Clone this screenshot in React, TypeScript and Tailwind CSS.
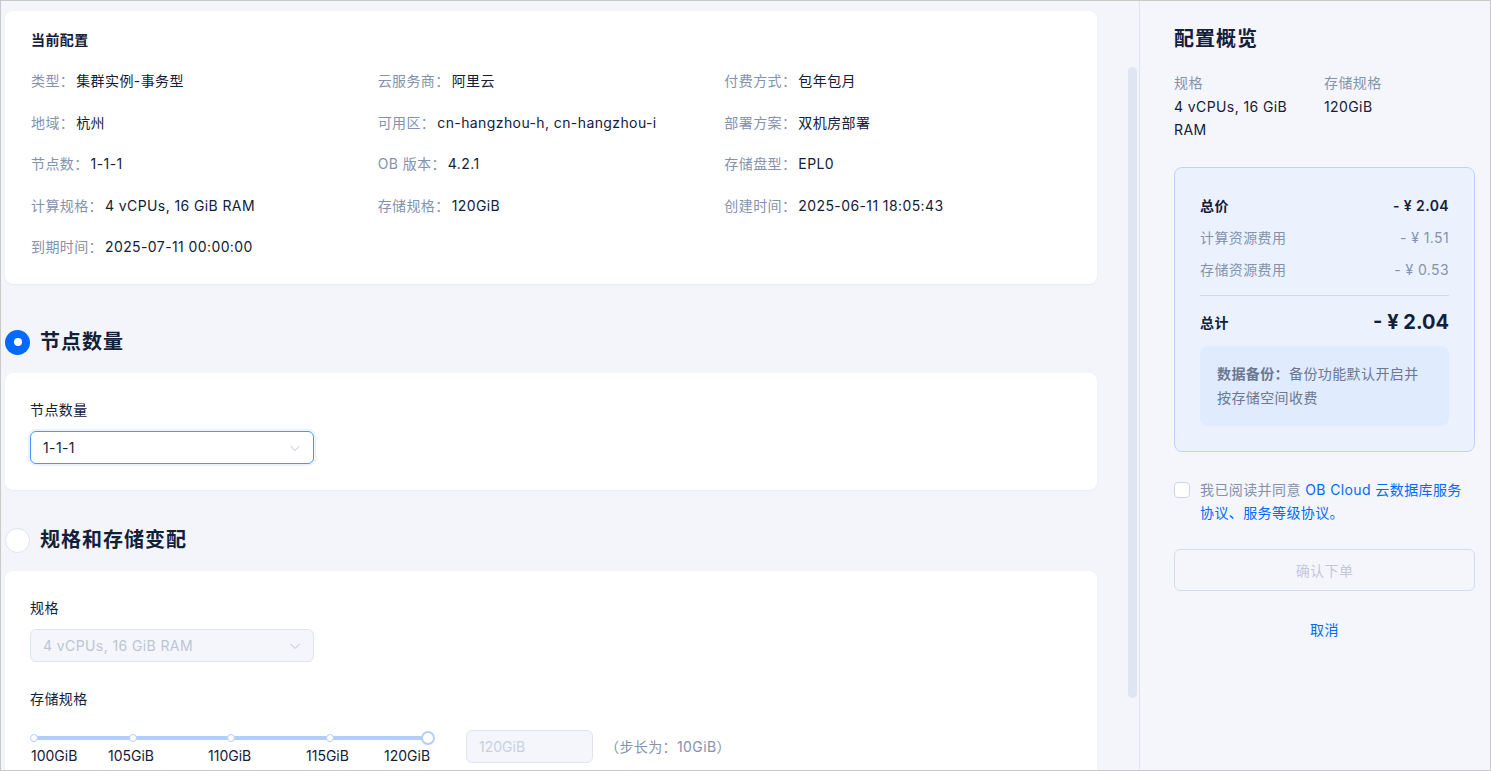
import React from "react";

const FONT = { fontFamily: 'Inter, "Noto Sans CJK SC", sans-serif' };

function Chevron() {
  return (
    <svg width="12" height="12" viewBox="0 0 12 12" fill="none">
      <polyline points="1.5,4 6,8.5 10.5,4" stroke="#b8c1d1" strokeWidth="1" fill="none" />
    </svg>
  );
}

const rows: [string, string][][] = [
  [["类型：", "集群实例-事务型"], ["云服务商：", "阿里云"], ["付费方式：", "包年包月"]],
  [["地域：", "杭州"], ["可用区：", "cn-hangzhou-h, cn-hangzhou-i"], ["部署方案：", "双机房部署"]],
  [["节点数：", "1-1-1"], ["OB 版本：", "4.2.1"], ["存储盘型：", "EPL0"]],
  [["计算规格：", "4 vCPUs, 16 GiB RAM"], ["存储规格：", "120GiB"], ["创建时间：", "2025-06-11 18:05:43"]],
  [["到期时间：", "2025-07-11 00:00:00"]],
];

const dots = [34, 133, 231, 330];

export default function App() {
  return (
    <div
      style={FONT}
      className="w-[1491px] h-[771px] overflow-hidden border border-[#c9c9c9] bg-[#f3f5fa] flex text-[#132039] tracking-[0.4px]"
    >
      {/* Left scroll area */}
      <div className="relative w-[1139px] shrink-0 h-full overflow-hidden border-r border-[#dfe4ee]">
        <div className="pl-[4px] pt-[10px] w-[1096px]">
          {/* Card 1 */}
          <div className="bg-white rounded-lg shadow-[0_1px_2px_rgba(20,40,80,0.05)] pl-[26px] pr-[26px] pt-[18px] pb-[26px]">
            <div className="text-[14px] leading-[22px] font-semibold">当前配置</div>
            <div className="mt-[19px] grid grid-cols-3 gap-y-[19.5px]">
              {rows.flat().map(([k, v], i) => (
                <div key={i} className="text-[14px] leading-[22px] whitespace-nowrap">
                  <span className="text-[#8592ad] mr-[2px]">{k}</span>
                  <span className="text-[#132039]">{v}</span>
                </div>
              ))}
            </div>
          </div>

          {/* Section 1 */}
          <div className="mt-[44px] mb-[17px] flex items-center h-[28px]">
            <div className="w-[25px] h-[25px] rounded-full bg-[#006aff] flex items-center justify-center">
              <div className="w-[8px] h-[8px] rounded-full bg-white" />
            </div>
            <div className="ml-[10px] text-[20px] leading-[28px] font-bold tracking-[1px]">节点数量</div>
          </div>
          <div className="bg-white rounded-lg shadow-[0_1px_2px_rgba(20,40,80,0.05)] pl-[25px] pt-[26px] pb-[26px]">
            <div className="text-[14px] leading-[22px]">节点数量</div>
            <div className="mt-[10px] w-[284px] h-[33px] rounded-md border border-[#4d94ff] shadow-[0_0_0_2px_rgba(0,106,255,0.08)] flex items-center justify-between pl-[12px] pr-[12px]">
              <span className="text-[14px]">1-1-1</span>
              <Chevron />
            </div>
          </div>

          {/* Section 2 */}
          <div className="mt-[36px] mb-[17px] flex items-center h-[28px]">
            <div className="w-[25px] h-[25px] rounded-full bg-white border border-[#dde3ee]" />
            <div className="ml-[10px] text-[20px] leading-[28px] font-bold tracking-[1px]">规格和存储变配</div>
          </div>
          <div className="bg-white rounded-lg shadow-[0_1px_2px_rgba(20,40,80,0.05)] pl-[25px] pt-[26px] pb-[40px]">
            <div className="text-[14px] leading-[22px]">规格</div>
            <div className="mt-[10px] w-[284px] h-[33px] rounded-md border border-[#dfe4ee] bg-[#f4f6fb] flex items-center justify-between pl-[12px] pr-[12px]">
              <span className="text-[14px] text-[#bcc5d6]">4 vCPUs, 16 GiB RAM</span>
              <Chevron />
            </div>
            <div className="mt-[26px] text-[14px] leading-[22px]">存储规格</div>
            <div className="mt-[18px] flex items-start">
              <div className="relative w-[410px] h-[40px]">
                <div className="absolute left-[3px] top-[8px] w-[395px] h-[4px] rounded-full bg-[#b3cff9]" />
                {dots.map((x) => (
                  <div
                    key={x}
                    className="absolute top-[6px] w-[8px] h-[8px] rounded-full bg-white border-[1.5px] border-[#b3cff9]"
                    style={{ left: x - 30 - 4 }}
                  />
                ))}
                <div className="absolute left-[391px] top-[3px] w-[14px] h-[14px] rounded-full bg-white border-2 border-[#b3cff9]" />
                <div className="absolute left-[1px] top-[18px] text-[14px] leading-[20px] tracking-normal">100GiB</div>
                <div className="absolute left-[78px] top-[18px] text-[14px] leading-[20px] tracking-normal">105GiB</div>
                <div className="absolute left-[178px] top-[18px] text-[14px] leading-[20px] tracking-normal">110GiB</div>
                <div className="absolute left-[276px] top-[18px] text-[14px] leading-[20px] tracking-normal">115GiB</div>
                <div className="absolute left-[354px] top-[18px] text-[14px] leading-[20px] tracking-normal">120GiB</div>
              </div>
              <div className="ml-[26px] mt-[2px] w-[127px] h-[33px] rounded-md border border-[#dfe4ee] bg-[#f4f6fb] flex items-center pl-[12px]">
                <span className="text-[14px] text-[#c8d0dd] tracking-normal">120GiB</span>
              </div>
              <div className="ml-[12px] mt-[2px] h-[33px] flex items-center text-[14px] text-[#8592ad]">（步长为：10GiB）</div>
            </div>
          </div>
        </div>
        {/* scrollbar */}
        <div className="absolute right-[2px] top-[66px] w-[9px] h-[631px] rounded-full bg-[#dfe6f2]" />
      </div>

      {/* Right panel */}
      <div className="flex-1 h-full bg-[#f4f6fb] pl-[34px] pr-[14px] pt-[24px]">
        <div className="text-[20px] leading-[28px] font-bold tracking-[1px]">配置概览</div>
        <div className="mt-[19px] grid grid-cols-[140px_140px] gap-x-[10px] text-[14px]">
          <div>
            <div className="leading-[22px] text-[#8592ad]">规格</div>
            <div className="mt-[1px] leading-[23px]">4 vCPUs, 16 GiB RAM</div>
          </div>
          <div>
            <div className="leading-[22px] text-[#8592ad]">存储规格</div>
            <div className="mt-[1px] leading-[23px]">120GiB</div>
          </div>
        </div>

        <div className="mt-[26px] w-[301px] rounded-lg border border-[#bcd4fb] bg-[#ebf2fe] pl-[25px] pr-[25px] pt-[28px] pb-[25px]">
          <div className="flex flex-col gap-y-[12px] text-[14px] leading-[20px]">
            <div className="flex justify-between font-semibold">
              <span>总价</span>
              <span>- ¥ 2.04</span>
            </div>
            <div className="flex justify-between text-[#8592ad]">
              <span>计算资源费用</span>
              <span>- ¥ 1.51</span>
            </div>
            <div className="flex justify-between text-[#8592ad]">
              <span>存储资源费用</span>
              <span>- ¥ 0.53</span>
            </div>
          </div>
          <div className="mt-[15px] h-px bg-[#cadcf8]" />
          <div className="mt-[12px] flex justify-between items-center h-[28px]">
            <span className="text-[14px] font-semibold">总计</span>
            <span className="text-[20px] font-bold tracking-normal">- ¥ 2.04</span>
          </div>
          <div className="mt-[10px] rounded-lg bg-[#e0ebfd] pl-[17px] pr-[24px] py-[16px] text-[14px] leading-[24px] text-[#6b7891]">
            <span className="font-semibold">数据备份：</span>
            <span>备份功能默认开启并按存储空间收费</span>
          </div>
        </div>

        <div className="mt-[26px] flex items-start">
          <div className="mt-[3.5px] w-[16px] h-[16px] rounded-[4px] border border-[#cdd5e4] bg-white shrink-0" />
          <div className="ml-[10px] text-[14px] leading-[23px]">
            <span className="text-[#8592ad]">我已阅读并同意 </span>
            <span className="text-[#006aff]">
              OB Cloud 云数据库服务
              <br />
              协议、服务等级协议。
            </span>
          </div>
        </div>

        <div className="mt-[25px] w-[301px] h-[42px] rounded-md border border-[#d5dce8] flex items-center justify-center text-[14px] text-[#c1c9d8]">
          确认下单
        </div>
        <div className="mt-[28px] w-[301px] text-center text-[14px] leading-[22px] text-[#006aff]">取消</div>
      </div>
    </div>
  );
}
